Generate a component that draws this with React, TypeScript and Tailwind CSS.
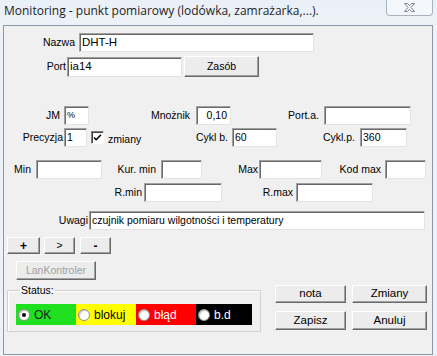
import React from "react";

const font = { fontFamily: '"Liberation Sans", Arial, sans-serif' };

const Label = ({ w, children }: { w: string; children: React.ReactNode }) => (
    <span className={`${w} shrink-0 text-right leading-none`}>{children}</span>
);

const Input = ({ w, value = "", right = false, cls = "" }: { w: string; value?: string; right?: boolean; cls?: string }) => (
    <div
        className={`${w} h-[19px] shrink-0 bg-white border border-t-[#a0a0a0] border-l-[#a0a0a0] border-b-[#e3e3e3] border-r-[#e3e3e3] shadow-[inset_1px_1px_0_#696969] flex items-center px-[2px] leading-none ${right ? "justify-end pr-[3px]" : ""} ${cls}`}
    >
        {value}
    </div>
);

const Button = ({ w, h = "h-[19px]", children, disabled = false, cls = "" }: { w: string; h?: string; children: React.ReactNode; disabled?: boolean; cls?: string }) => (
    <button
        className={`${w} ${h} shrink-0 bg-[#ececec] border border-t-white border-l-white border-b-[#696969] border-r-[#696969] shadow-[inset_-1px_-1px_0_#a0a0a0] flex items-center justify-center leading-none ${disabled ? "text-[#a0a0a0]" : "text-black"} ${cls}`}
    >
        {children}
    </button>
);

const Radio = ({ checked = false }: { checked?: boolean }) => (
    <span className="w-[12px] h-[12px] rounded-full bg-white border border-[#8e8f8f] shadow-[inset_1px_1px_1px_#c8c8c8] flex items-center justify-center shrink-0">
        {checked && <span className="w-[4px] h-[4px] rounded-full bg-black" />}
    </span>
);

const App = () => {
    return (
        <div className="w-[437px] h-[356px] bg-[#edf2f8] text-[10.5px] text-black flex flex-col overflow-hidden" style={font}>
            {/* Title bar */}
            <div className="h-[25px] flex items-start justify-between shrink-0 bg-gradient-to-b from-[#eaf0f8] to-[#edf2f8]">
                <span className="pl-[4px] pt-[5px] text-[12px] text-[#1e1e1e] leading-none" style={{ fontFamily: '"Open Sans", "Noto Sans", sans-serif' }}>
                    Monitoring - punkt pomiarowy (lodówka, zamrażarka,...).
                </span>
                <div className="w-[47px] h-[16px] mr-[4px] rounded-b-[4px] border border-t-0 border-[#a9b3bf] bg-[#f4f7fb] flex items-center justify-center">
                    <svg width="13" height="11" viewBox="0 0 13 11">
                        <path
                            d="M1.5 1.5h3l2 2.2 2-2.2h3l-3.5 4 3.5 4h-3l-2-2.2-2 2.2h-3l3.5-4z"
                            fill="#f8f8f8"
                            stroke="#7a8594"
                            strokeWidth="1"
                            strokeLinejoin="round"
                        />
                    </svg>
                </div>
            </div>

            {/* Panel */}
            <div className="ml-[3px] mr-[4px] mb-[1px] flex-1 bg-[#f0f0f0] border border-[#8d98a6] flex flex-col pt-[7px]">
                {/* Nazwa */}
                <div className="flex items-center h-[19px]">
                    <Label w="w-[71px]">Nazwa</Label>
                    <Input w="w-[235px]" value="DHT-H" cls="ml-[4px] text-[11.5px]" />
                </div>
                {/* Port */}
                <div className="flex items-center h-[21px] mt-[4px]">
                    <Label w="w-[62px]">Port</Label>
                    <Input w="w-[115px]" value="ia14" cls="ml-[1px] h-[20px] text-[11.5px]" />
                    <Button w="w-[75px]" h="h-[21px]" cls="ml-[2px]">Zasób</Button>
                </div>

                {/* JM / Mnożnik / Port.a. */}
                <div className="flex items-center h-[19px] mt-[29px]">
                    <Label w="w-[56px]">JM</Label>
                    <Input w="w-[25px]" value="%" cls="ml-[4px] text-[9px]" />
                    <Label w="w-[101px]">Mnożnik</Label>
                    <Input w="w-[35px]" value="0,10" right cls="ml-[6px]" />
                    <Label w="w-[88px]">Port.a.</Label>
                    <Input w="w-[87px]" cls="ml-[5px]" />
                </div>

                {/* Precyzja / zmiany / Cykl b. / Cykl.p. */}
                <div className="flex items-center h-[19px] mt-[3px]">
                    <Label w="w-[59px]">Precyzja</Label>
                    <Input w="w-[23px]" value="1" cls="ml-[1px]" />
                    <span className="ml-[4px] w-[13px] h-[13px] bg-white border border-t-[#808080] border-l-[#808080] border-b-white border-r-white shadow-[inset_1px_1px_0_#404040] flex items-center justify-center shrink-0">
                        <svg width="9" height="9" viewBox="0 0 9 9">
                            <path d="M1 4.5l2.2 2.2L8 1.8" fill="none" stroke="#000" strokeWidth="1.6" />
                        </svg>
                    </span>
                    <span className="ml-[4px] w-[33px] shrink-0 leading-none pt-[3px]">zmiany</span>
                    <Label w="w-[87px]">Cykl b.</Label>
                    <Input w="w-[45px]" value="60" cls="ml-[4px]" />
                    <Label w="w-[78px]">Cykl.p.</Label>
                    <Input w="w-[47px]" value="360" cls="ml-[5px]" />
                </div>

                {/* Min / Kur. min / Max / Kod max */}
                <div className="flex items-center h-[19px] mt-[13px]">
                    <Label w="w-[27px]">Min</Label>
                    <Input w="w-[66px]" cls="ml-[5px]" />
                    <Label w="w-[54px]">Kur. min</Label>
                    <Input w="w-[41px]" cls="ml-[5px]" />
                    <Label w="w-[56px]">Max</Label>
                    <Input w="w-[63px]" cls="ml-[1px]" />
                    <Label w="w-[59px]">Kod max</Label>
                    <Input w="w-[41px]" cls="ml-[4px]" />
                </div>

                {/* R.min / R.max */}
                <div className="flex items-center h-[19px] mt-[4px]">
                    <Label w="w-[138px]">R.min</Label>
                    <Input w="w-[78px]" cls="ml-[2px]" />
                    <Label w="w-[71px]">R.max</Label>
                    <Input w="w-[77px]" cls="ml-[3px]" />
                </div>

                {/* Uwagi */}
                <div className="flex items-center h-[19px] mt-[9px]">
                    <Label w="w-[84px]">Uwagi</Label>
                    <Input w="w-[336px]" value="czujnik pomiaru wilgotności i temperatury" cls="ml-[1px]" />
                </div>

                {/* + > - */}
                <div className="flex items-center h-[17px] mt-[7px]">
                    <Button w="w-[33px]" h="h-[17px]" cls="ml-[3px] font-bold text-[12px]">+</Button>
                    <Button w="w-[31px]" h="h-[17px]" cls="ml-[4px] text-[#a0a0a0]">&gt;</Button>
                    <Button w="w-[31px]" h="h-[17px]" cls="ml-[5px] font-bold text-[12px]">-</Button>
                </div>

                {/* LanKontroler */}
                <div className="flex items-center h-[19px] mt-[7px]">
                    <Button w="w-[80px]" disabled cls="ml-[12px]">LanKontroler</Button>
                </div>

                {/* Status + actions */}
                <div className="flex items-start mt-[4px]">
                    <fieldset className="ml-[3px] w-[254px] h-[48px] border border-[#d0d0d0] shadow-[inset_1px_1px_0_#ffffff] px-[8px] pb-[5px] shrink-0">
                        <legend className="ml-[4px] px-[1px] leading-[13px]">Status:</legend>
                        <div className="mt-[7px] flex h-[21px] w-[236px]">
                            <div className="w-[60px] bg-[#1ee01e] flex items-center pl-[2px] gap-[4px]">
                                <Radio checked />
                                <span className="text-[12px] text-[#1a1a1a] leading-none">OK</span>
                            </div>
                            <div className="w-[60px] bg-[#ffff00] flex items-center pl-[2px] gap-[4px]">
                                <Radio />
                                <span className="text-[12px] leading-none">blokuj</span>
                            </div>
                            <div className="w-[60px] bg-[#ff0000] flex items-center pl-[2px] gap-[4px]">
                                <Radio />
                                <span className="text-[12px] text-white leading-none">błąd</span>
                            </div>
                            <div className="w-[56px] bg-black flex items-center pl-[2px] gap-[4px]">
                                <Radio />
                                <span className="text-[12px] text-white leading-none">b.d</span>
                            </div>
                        </div>
                    </fieldset>
                    <div className="ml-[14px] mt-[1px] grid grid-cols-[71px_75px] gap-x-[6px] gap-y-[8px] text-[11.5px]">
                        <Button w="w-[71px]" h="h-[18px]">nota</Button>
                        <Button w="w-[75px]" h="h-[18px]">Zmiany</Button>
                        <Button w="w-[71px]" h="h-[19px]">Zapisz</Button>
                        <Button w="w-[75px]" h="h-[19px]">Anuluj</Button>
                    </div>
                </div>
            </div>
        </div>
    );
};

export default App;
